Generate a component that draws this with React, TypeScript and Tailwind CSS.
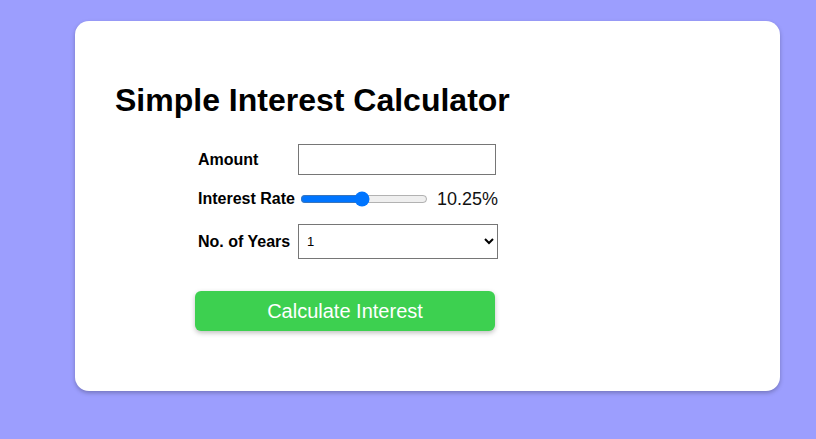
import { useState } from "react";

const years = Array.from({ length: 10 }, (_, i) => i + 1);

export default function App() {
  const [rate, setRate] = useState(10.25);

  return (
    <div className="min-h-[439px] w-full bg-[#9c9efe] pt-[21px] font-['Liberation_Sans',Arial,sans-serif]">
      <div className="ml-[75px] h-[370px] w-[705px] rounded-[14px] bg-white pl-[40px] pt-[61px] shadow-[0_2px_4px_rgba(0,0,0,0.25)]">
        <h1 className="text-[32px] font-bold leading-[37px] text-black">
          Simple Interest Calculator
        </h1>
        <div className="ml-[80px] mt-[25px]">
          <div className="grid grid-cols-[auto_auto] justify-start items-center gap-x-[3px] pl-[3px] whitespace-nowrap">
            <label className="h-[31px] text-[16px] font-bold leading-[31px] text-black">
              Amount
            </label>
            <input
              type="text"
              className="h-[31px] w-[198px] border border-[#767676] px-2 text-[13px] outline-none"
            />
            <label className="mt-[13px] h-[22px] text-[16px] font-bold leading-[22px] text-black">
              Interest Rate
            </label>
            <div className="mt-[13px] flex h-[22px] items-center">
              <input
                type="range"
                min={1}
                max={20}
                step={0.25}
                value={rate}
                onChange={(e) => setRate(Number(e.target.value))}
                className="m-0 ml-[2px] w-[128px] accent-[#0075ff]"
              />
              <span className="ml-[9px] text-[18px] leading-[22px] text-[#111]">
                {rate.toFixed(2)}%
              </span>
            </div>
            <label className="mt-[14px] h-[35px] text-[16px] font-bold leading-[35px] text-black">
              No. of Years
            </label>
            <select className="mt-[14px] h-[35px] w-[200px] border border-[#767676] bg-white pl-[4px] text-[13px] text-black">
              {years.map((y) => (
                <option key={y} value={y}>
                  {y}
                </option>
              ))}
            </select>
          </div>
          <button className="mt-[32px] h-[40px] w-[300px] rounded-[6px] bg-[#3dd050] text-[20px] text-white shadow-[0_2px_5px_rgba(0,0,0,0.25)]">
            Calculate Interest
          </button>
        </div>
      </div>
    </div>
  );
}
